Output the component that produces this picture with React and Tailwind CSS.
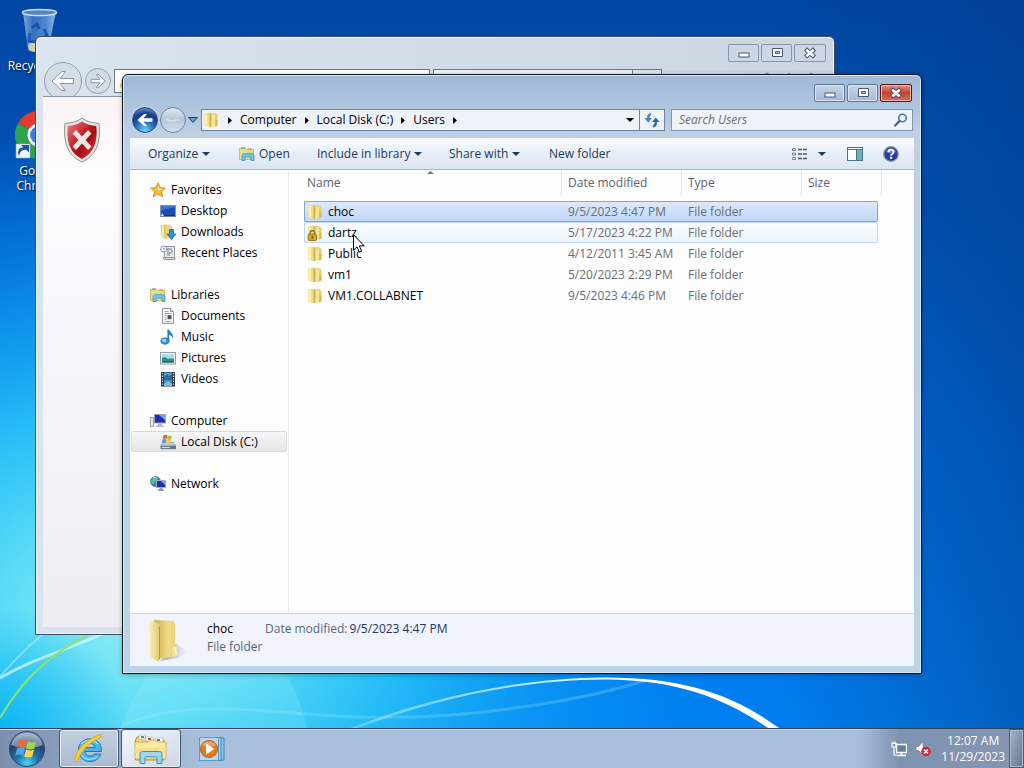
import { useState } from "react";
import clsx from "clsx";
import { Home, Settings, Star } from "lucide-react";

const FILES = [
  { name: "choc", modified: "9/5/2023 4:47 PM", type: "File folder" },
  { name: "dartz", modified: "5/17/2023 4:22 PM", type: "File folder", locked: true },
  { name: "Public", modified: "4/12/2011 3:45 AM", type: "File folder" },
  { name: "vm1", modified: "5/20/2023 2:29 PM", type: "File folder" },
  { name: "VM1.COLLABNET", modified: "9/5/2023 4:46 PM", type: "File folder" },
];

// Navigation pane groups, each with its own children
const NAV_GROUPS = [
  {
    label: "Favorites",
    Icon: StarIcon,
    items: [
      { label: "Desktop", Icon: DesktopIcon },
      { label: "Downloads", Icon: DownloadsIcon },
      { label: "Recent Places", Icon: RecentIcon },
    ],
  },
  {
    label: "Libraries",
    Icon: LibraryIcon,
    items: [
      { label: "Documents", Icon: DocumentIcon },
      { label: "Music", Icon: MusicIcon },
      { label: "Pictures", Icon: PictureIcon },
      { label: "Videos", Icon: VideoIcon },
    ],
  },
  {
    label: "Computer",
    Icon: ComputerIcon,
    items: [{ label: "Local Disk (C:)", Icon: DiskIcon, current: true }],
  },
  { label: "Network", Icon: NetworkIcon, items: [] },
];

const CRUMBS = ["Computer", "Local Disk (C:)", "Users"];

/* ---------- icons ---------- */

function FolderIcon({ locked }) {
  return (
    <svg className="size-4 shrink-0" viewBox="0 0 16 16">
      <path d="M7 1l5.500.3L14.500 3v10.500L8 15z" fill="#e8cf6c" />
      <path d="M9 2.500h3v11l-3.500 1z" fill="#f5e597" />
      <path d="M12.500 7l2 1v5.500l-2.500 1z" fill="#dcbc50" />
      <path d="M.8 1.800L6.500.5 8 2.500V15.200L1.500 14z" fill="#f1dd83" />
      <path d="M1.500 2.500L4 2v12L2 13.500z" fill="#fbf3bf" />
      <path d="M6.500.5L8 2.500v12.700l-1.300-.4z" fill="#cfae49" />
      {locked && (
        <g>
          <path d="M3 9.500V8a2.300 2.300 0 0 1 4.600 0v1.500" fill="none" stroke="#7a6420" strokeWidth="1.300" />
          <rect x="1" y="9.200" width="8.500" height="6.300" rx="1" fill="#d8a520" stroke="#8a6814" strokeWidth=".8" />
          <rect x="4.600" y="11" width="1.300" height="2.400" fill="#5a4208" />
        </g>
      )}
    </svg>
  );
}

function BigFolderIcon() {
  return (
    <svg className="h-[46px] w-10 shrink-0" viewBox="0 0 40 46">
      <defs>
        <linearGradient id="bf1" x1="0" x2="1">
          <stop offset="0" stopColor="#cdb04c" />
          <stop offset=".7" stopColor="#f0dc85" />
          <stop offset="1" stopColor="#e9d176" />
        </linearGradient>
        <linearGradient id="bf2" x1="0" x2="1">
          <stop offset="0" stopColor="#faf0b8" />
          <stop offset="1" stopColor="#e6cb6c" />
        </linearGradient>
        <linearGradient id="bf3" x1="0" x2="1">
          <stop offset=".3" stopColor="#7d8296" stopOpacity=".5" />
          <stop offset="1" stopColor="#7d8296" stopOpacity="0" />
        </linearGradient>
      </defs>
      <path d="M12 43l18-3 9-6-11-9z" fill="url(#bf3)" />
      <path d="M6 2l19 1 2 3v32l-17 3z" fill="url(#bf1)" />
      <path d="M24 30l4-2 2 9-5 2z" fill="#f3e49c" />
      <path d="M27 29l1 7" stroke="#fff" strokeWidth="1.500" />
      <path d="M1 2l8 3c2 1 2.500 2 2.500 5v31c0 2-1 3-2.500 2l-6-4c-1-1-1-1-1-3z" fill="url(#bf2)" />
      <path d="M11.500 9v32" stroke="#b8983c" strokeWidth="1" />
    </svg>
  );
}

function StarIcon() {
  return (
    <svg className="size-4 shrink-0" viewBox="0 0 16 16">
      <path
        d="M8 .8l2.200 4.800 5.200.5-3.900 3.500 1.200 5.200L8 12.100l-4.700 2.700 1.200-5.200L.6 6.100l5.200-.5z"
        fill="#fbb92f"
        stroke="#d9822b"
        strokeWidth=".9"
      />
      <path d="M8 2.800l1.300 3.600 3.600.4L8 9z" fill="#fff1a8" />
    </svg>
  );
}

function DesktopIcon() {
  return (
    <svg className="size-4 shrink-0" viewBox="0 0 16 16">
      <rect x=".5" y="2.500" width="15" height="11" fill="#1c4db4" stroke="#7e93b5" />
      <path d="M1 8c5-3 10-2 14-4V3H1z" fill="#3f74d6" />
      <path d="M1 12.500h14" stroke="#2b3553" strokeWidth="1.400" />
      <path d="M1 13l1-3 2 3z" fill="#d9ecff" />
    </svg>
  );
}

function DownloadsIcon() {
  return (
    <svg className="size-4 shrink-0" viewBox="0 0 16 16">
      <path d="M6 .5l6 .8v12L6 15z" fill="#ecd77c" />
      <path d="M.8 1.500L6 .5V15l-4.500-1.500z" fill="#e2c863" />
      <path d="M1.800 2.200L4 1.800v12l-2-.5z" fill="#f8eca8" />
      <path d="M9.500 5.500h4V10H16l-4.500 5.500L7 10h2.500z" fill="#2f8fd8" stroke="#15599f" strokeWidth=".7" />
    </svg>
  );
}

function RecentIcon() {
  return (
    <svg className="size-4 shrink-0" viewBox="0 0 16 16">
      <path d="M4.500 1.500h10v11h-10z" fill="#e9ecef" stroke="#8f98a1" />
      <path d="M7 4h5M7 6h2m2 0h2M7 8h5M7 10h3" stroke="#6f7a86" />
      <path d="M3 12.500h12v2H5c-1 0-2-1-2-2z" fill="#cfd5da" stroke="#8f98a1" />
      <circle cx="3.600" cy="4" r="3" fill="#fff" stroke="#8791a0" />
      <path d="M3.600 2.400V4h1.500" fill="none" stroke="#55606c" strokeWidth=".8" />
    </svg>
  );
}

function LibraryIcon() {
  return (
    <svg className="size-4 shrink-0" viewBox="0 0 16 16">
      <path d="M.5 2.500h6l1 1h7v10H.5z" fill="#f3dd88" stroke="#cfa94a" strokeWidth=".8" />
      <path d="M2 2h4" stroke="#58b158" strokeWidth="1.200" />
      <path d="M9 3h4" stroke="#e08a4a" strokeWidth="1.200" />
      <path d="M1.500 5h12.500v3H1.500z" fill="#cfe3a0" />
      <path d="M3 14.500V10c0-1.500.8-2.300 2.300-2.300h7.400c1.500 0 2.300.8 2.300 2.300v4.500h-3V11H6v3.500z" fill="#77c4ea" stroke="#3d8dbd" strokeWidth=".8" />
    </svg>
  );
}

function DocumentIcon() {
  return (
    <svg className="size-4 shrink-0" viewBox="0 0 16 16">
      <path d="M2.500.5h8l3 3v12h-11z" fill="#fdfdfd" stroke="#8d949c" />
      <path d="M10.500.5v3h3" fill="#dce1e6" stroke="#8d949c" />
      <path d="M4.500 3.500h4m-4 2h7m-7 2h2m-2 2h2m-2 2h2m-2 2h7" stroke="#9aa3ad" />
      <rect x="7.500" y="7.200" width="4" height="4" fill="#49545f" />
    </svg>
  );
}

function MusicIcon() {
  return (
    <svg className="size-4 shrink-0" viewBox="0 0 16 16">
      <ellipse cx="5" cy="12" rx="4.200" ry="3.200" fill="#3a93cf" stroke="#2a6fa8" strokeWidth=".6" />
      <ellipse cx="4.200" cy="11.400" rx="2" ry="1.300" fill="#a6dcf6" />
      <path d="M7.400 12V.5h1.600c.3 2.500 5 3.500 4 9.500-.8-2.800-2.200-3.800-3.800-4V12z" fill="#2c7fbe" />
    </svg>
  );
}

function PictureIcon() {
  return (
    <svg className="size-4 shrink-0" viewBox="0 0 16 16">
      <rect x=".5" y="2.500" width="15" height="11.500" fill="#fff" stroke="#8f9aa5" />
      <rect x="2" y="4" width="12" height="8.500" fill="#a9dcf0" />
      <path d="M2 8c2-1.500 4-1 6 1 2-.7 4-.5 6 0v3.500H2z" fill="#2f8f86" />
      <path d="M2 11h12v1.500H2z" fill="#1d5f7a" />
    </svg>
  );
}

function VideoIcon() {
  return (
    <svg className="size-4 shrink-0" viewBox="0 0 16 16">
      <rect x="1" y="1" width="14" height="14.500" fill="#29323d" />
      <rect x="4" y="1.500" width="8" height="6" fill="#4ea2dc" />
      <rect x="4" y="8.500" width="8" height="6.500" fill="#3a8fd0" />
      <path d="M4 6l3-3 2 2 3-2v4.500H4z" fill="#2a6f86" />
      <path d="M4 13l4-3 4 3v2H4z" fill="#7cc0ee" />
      <path d="M2.500 2v13M13.500 2v13" stroke="#e8edf2" strokeWidth="1.200" strokeDasharray="1.300 1.300" />
    </svg>
  );
}

function ComputerIcon() {
  return (
    <svg className="size-4 shrink-0" viewBox="0 0 16 16">
      <rect x=".5" y="4.500" width="3" height="9" fill="#dfe3e8" stroke="#8c95a0" strokeWidth=".8" />
      <rect x="4.500" y="1.500" width="11" height="8.500" fill="#1c2fb0" stroke="#98a3b4" />
      <path d="M9 2h6v5z" fill="#7f9cf2" />
      <path d="M8 10.500h4v2h2v1.500H6v-1.500h2z" fill="#b6bec9" />
    </svg>
  );
}

function DiskIcon() {
  return (
    <svg className="size-4 shrink-0" viewBox="0 0 16 16">
      <path d="M2.500 8.500h11L16 12H.5z" fill="#c3ccd6" stroke="#8a94a0" strokeWidth=".6" />
      <path d="M.5 11.800H16v3.400H.5z" fill="#66788c" />
      <path d="M2 13.500h8" stroke="#c8f08a" strokeWidth="1.200" />
      <path d="M3.500 1.400c1.500-.9 3-.7 4 0L6.700 5c-1-.7-2.500-.7-4 0z" fill="#e8622c" />
      <path d="M8 1.600c1.200.7 2.700.7 4 0L11 5.200c-1.300.7-2.700.7-3.900 0z" fill="#8cc63c" />
      <path d="M2.500 5.500c1.500-.8 3-.7 4 0l-.8 3.400c-1.200-.7-2.500-.7-4 0z" fill="#4a9be0" />
      <path d="M7 5.700c1.200.7 2.700.7 3.900 0L10 9.300c-1.300.7-2.700.7-3.900 0z" fill="#f8c62d" />
    </svg>
  );
}

function NetworkIcon() {
  return (
    <svg className="size-4 shrink-0" viewBox="0 0 16 16">
      <circle cx="5.500" cy="5.500" r="5" fill="#2c86cf" stroke="#1b5d98" strokeWidth=".6" />
      <path d="M2 3c2-2.500 5-2 5.500-.5S4.500 5 4.500 7 2 8 1 6.500 1.300 3.800 2 3z" fill="#5fc07b" />
      <path d="M3 1.800c1-.8 2.500-.8 3.500-.3" stroke="#d8f5ff" fill="none" />
      <rect x="6.500" y="4.500" width="9" height="7" fill="#1c2fb0" stroke="#a3adbd" />
      <path d="M11 5h4v4z" fill="#7f9cf2" />
      <path d="M9.500 12h3v1.500h1.500V15H8v-1.500h1.500z" fill="#8f9aa8" />
    </svg>
  );
}

function Caret() {
  return (
    <svg className="h-1 w-2 shrink-0" viewBox="0 0 8 4">
      <path d="M0 0h8L4 4z" fill="currentColor" />
    </svg>
  );
}

function ArrowRight() {
  return (
    <svg className="h-[7px] w-1 shrink-0" viewBox="0 0 4 7">
      <path d="M0 0l4 3.500L0 7z" fill="#000" />
    </svg>
  );
}

function RefreshIcon() {
  return (
    <svg className="size-4" viewBox="0 0 16 16">
      <path d="M7 2C4.500 2.500 4 4.500 4.200 6.500" fill="none" stroke="#3e7fc6" strokeWidth="2.200" />
      <path d="M.5 6h7.400L4.200 10.500z" fill="#3e7fc6" />
      <path d="M9 14.500c2.500-.5 3-2.500 2.800-4.500" fill="none" stroke="#2b66ae" strokeWidth="2.200" />
      <path d="M8.100 10h7.400L11.800 5.500z" fill="#2b66ae" />
    </svg>
  );
}

function SearchIcon() {
  return (
    <svg className="size-[14px]" viewBox="0 0 14 14">
      <circle cx="8.500" cy="5" r="3.800" fill="#eaf5fd" stroke="#4679b4" strokeWidth="1.600" />
      <path d="M5.600 8L1.200 12.600" stroke="#3c5f92" strokeWidth="2.200" strokeLinecap="round" />
    </svg>
  );
}

function ShieldIcon() {
  return (
    <svg className="h-[46px] w-[38px]" viewBox="0 0 38 46">
      <defs>
        <linearGradient id="sh" x1="0" y1="0" x2="1" y2="1">
          <stop offset="0" stopColor="#e78787" />
          <stop offset=".45" stopColor="#bf1c22" />
          <stop offset=".6" stopColor="#a60c14" />
          <stop offset="1" stopColor="#e8434a" />
        </linearGradient>
      </defs>
      <path d="M19 1c5 4 11 5 17 5.500 1.500 14 0 31-17 38.500C2 37.500.5 20.500 2 6.500 8 6 14 5 19 1z" fill="#e6e6e6" stroke="#8f8f8f" />
      <path d="M19 4.500c5 3 9 4 14.300 4.500C34.500 21 33 35 19 42 5 35 3.500 21 4.700 9 10 8.500 14 7.500 19 4.500z" fill="url(#sh)" />
      <path d="M13 13l6 6.500 6-6.500 3.500 3.500-6 6.500 6 6.500L25 33l-6-6.500L13 33l-3.500-3.500 6-6.500-6-6.500z" fill="#efe6e4" />
    </svg>
  );
}

function RecycleBinIcon() {
  return (
    <svg className="h-[46px] w-12" viewBox="0 0 48 46">
      <defs>
        <linearGradient id="bin" x1="0" x2="1">
          <stop offset="0" stopColor="#8fb6e2" />
          <stop offset=".3" stopColor="#3f78c4" />
          <stop offset=".7" stopColor="#5d94d8" />
          <stop offset="1" stopColor="#a9caec" />
        </linearGradient>
      </defs>
      <path d="M8 4l5 38c3 3 17 3 20 0l8-38z" fill="url(#bin)" opacity=".85" />
      <path d="M13 37c5-5 14-5 20 0l-1 5c-5 3-14 3-18 0z" fill="#d8cba8" />
      <ellipse cx="24.500" cy="4.500" rx="17" ry="3" fill="#5a83b8" stroke="#c9dbee" strokeWidth="1.500" />
      <path d="M17 20l5-4 2 5m-9 4l-1 8 7 1m6-3l5-4-3-6" fill="none" stroke="#1d56b0" strokeWidth="3" />
    </svg>
  );
}

function ChromeIcon() {
  return (
    <svg className="size-12" viewBox="0 0 48 48">
      <path d="M24 24L3.200 12A24 24 0 0 1 44.800 12z" fill="#e33b2e" />
      <path d="M24 24L3.200 12A24 24 0 0 0 24 48z" fill="#2ba24c" />
      <path d="M24 24h24a24 24 0 0 1-24 24z" fill="#fcc31e" />
      <path d="M24 24l20.800-12A24 24 0 0 1 48 24z" fill="#fcc31e" />
      <circle cx="24" cy="24" r="11.500" fill="#fff" />
      <circle cx="24" cy="24" r="9" fill="#3b7ded" />
      <rect x="1" y="33" width="14" height="14" fill="#eef3f8" stroke="#9ab" strokeWidth=".6" />
      <path d="M4 45c-2-5 0-9 4-8.500L6.500 34H14v7.500L11.500 39C8 38 5 40 4 45z" fill="#1d56a5" />
    </svg>
  );
}

function InternetExplorerIcon() {
  return (
    <svg className="size-8" viewBox="0 0 32 32">
      <path
        d="M28.500 18.500H11.800c.3 2.800 2.400 4.600 5.200 4.600 1.900 0 3.400-.7 4.200-2.100h6.600C26.200 25.600 22.200 28.500 17 28.500c-6.500 0-11.500-4.700-11.500-11.400S10.500 5.800 17 5.800c6.800 0 11.500 4.900 11.500 11.500zM11.900 14.600h10.200c-.4-2.500-2.400-4.100-5.100-4.100s-4.700 1.600-5.100 4.100z"
        fill="#4db4ea"
        stroke="#1d74b5"
        strokeWidth="1"
        fillRule="evenodd"
      />
      <path d="M8 11c4-4.500 12-5 17 0M8.500 22c3 5 11 6 16 1.500" stroke="#c8efff" strokeWidth="1.300" fill="none" opacity=".7" />
      <path d="M2.500 29C-.5 24 9 6 28.500 1.500L28 4.500C16 9 6.500 19.500 4.800 28.500z" fill="#f6cf2c" stroke="#d6a416" strokeWidth=".7" />
    </svg>
  );
}

function ExplorerIcon() {
  return (
    <svg className="h-8 w-9" viewBox="0 0 36 32">
      <path d="M4 4h9l2 3h16v20H2.500V7z" fill="#f0d070" stroke="#b98f2c" />
      <path d="M6 2h6v4H6z" fill="#fff" stroke="#9aa" strokeWidth=".5" />
      <path d="M13 4h7v4h-7z" fill="#fff" stroke="#9aa" strokeWidth=".5" />
      <path d="M22 5h8v4h-8z" fill="#fff" stroke="#9aa" strokeWidth=".5" />
      <path d="M8 3h3v2H8z" fill="#3aa343" />
      <path d="M15 5h3v2h-3z" fill="#d8462f" />
      <path d="M24 6h3v2h-3z" fill="#3a7fc4" />
      <path d="M2 9h13l2-2h6l1 2h9v17H2z" fill="#faeaa0" stroke="#cda43e" strokeWidth=".8" />
      <path d="M2.500 15h30v5h-30z" fill="#f6e08a" />
      <path d="M7 30.500V21c0-1.500 1-2.500 2.500-2.500h17c1.500 0 2.500 1 2.500 2.500v9.500h-5V25c0-.8-.4-1.200-1.200-1.200h-9.600c-.8 0-1.200.4-1.200 1.200v5.500z" fill="#9bd7f2" stroke="#3f8fbc" />
    </svg>
  );
}

function MediaPlayerIcon() {
  return (
    <svg className="size-7" viewBox="0 0 28 28">
      <rect x="6" y="3" width="20" height="22" fill="#8cc6e8" stroke="#3f86b8" />
      <rect x="4" y="2.500" width="19" height="23" fill="#a4d3ef" stroke="#3f86b8" />
      <rect x="1.500" y="2.500" width="19" height="23" fill="#b4d9ef" stroke="#5d9cc6" />
      <circle cx="11" cy="14" r="8.500" fill="#e8761f" stroke="#c25a12" />
      <path d="M4 10c3-5 11-5 14 0-4 2-10 2-14 0z" fill="#f7b27a" opacity=".7" />
      <path d="M8 8.500v11l8.500-5.500z" fill="#fff" />
    </svg>
  );
}

function StartOrb() {
  return (
    <svg className="size-[38px]" viewBox="0 0 38 38">
      <defs>
        <radialGradient id="orb" cx=".5" cy=".9" r=".9">
          <stop offset="0" stopColor="#4fd4f2" />
          <stop offset=".35" stopColor="#1d72a8" />
          <stop offset=".7" stopColor="#24436c" />
          <stop offset="1" stopColor="#8fa8c4" />
        </radialGradient>
      </defs>
      <circle cx="19" cy="19" r="17.500" fill="url(#orb)" stroke="#2a4a70" />
      <path d="M3.500 15C5 7 12 3 19 3s14 4 15.500 12c-8 4-23 4-31 0z" fill="#dfe9f4" opacity=".45" />
      <path d="M11 10.500c3-1.500 5.500-1.300 8 .2l-1.800 7c-2.500-1.500-5-1.700-8-.3z" fill="#ee6a35" />
      <path d="M20 11.300c2.500 1.400 5 1.400 8 .2l-1.800 7.200c-3 1.200-5.500 1-8-.3z" fill="#a6d14b" />
      <path d="M9 18.500c3-1.500 5.500-1.300 8 .2l-1.800 7c-2.500-1.500-5-1.700-8-.3z" fill="#4fa6e8" />
      <path d="M18 19.300c2.500 1.400 5 1.400 8 .2l-1.800 7.200c-3 1.200-5.500 1-8-.3z" fill="#fdd24a" />
    </svg>
  );
}

/* ---------- desktop ---------- */

function Wallpaper() {
  return (
    <svg className="absolute inset-0 size-full" viewBox="0 0 1024 728" preserveAspectRatio="none">
      <defs>
        <linearGradient id="sky" x1="0" y1="0" x2="0" y2="1">
          <stop offset="0" stopColor="#0146a4" />
          <stop offset=".3" stopColor="#0055b8" />
          <stop offset=".6" stopColor="#0068d8" />
          <stop offset="1" stopColor="#0080f2" />
        </linearGradient>
        <radialGradient id="glow" gradientUnits="userSpaceOnUse" cx="0" cy="0" r="1" gradientTransform="translate(130 620) scale(640 500)">
          <stop offset="0" stopColor="#8eecf5" />
          <stop offset=".2" stopColor="#5cdcf6" />
          <stop offset=".42" stopColor="#25bdf7" />
          <stop offset=".65" stopColor="#0f9ff6" stopOpacity=".7" />
          <stop offset="1" stopColor="#0080f2" stopOpacity="0" />
        </radialGradient>
        <radialGradient id="corner" gradientUnits="userSpaceOnUse" cx="0" cy="0" r="1" gradientTransform="translate(0 728) scale(130 120)">
          <stop offset="0" stopColor="#0bb6f4" />
          <stop offset="1" stopColor="#12b8f6" stopOpacity="0" />
        </radialGradient>
        <linearGradient id="shade" x1="0" x2="1">
          <stop offset=".75" stopColor="#00408c" stopOpacity="0" />
          <stop offset="1" stopColor="#003c88" stopOpacity=".5" />
        </linearGradient>
        <linearGradient id="arc" x1="0" x2="1">
          <stop offset="0" stopColor="#9fe6fc" stopOpacity=".4" />
          <stop offset=".4" stopColor="#c6efff" stopOpacity=".9" />
          <stop offset=".65" stopColor="#fff" />
        </linearGradient>
        <radialGradient id="haze" cx=".5" cy="1" r=".8">
          <stop offset="0" stopColor="#9af0f6" stopOpacity=".1" />
          <stop offset="1" stopColor="#9af0f6" stopOpacity=".25" />
        </radialGradient>
      </defs>
      <rect width="1024" height="728" fill="url(#sky)" />
      <rect width="1024" height="728" fill="url(#glow)" />
      <rect width="1024" height="728" fill="url(#corner)" />
      <rect width="1024" height="728" fill="url(#shade)" />
      <path d="M120 728C140 680 170 630 215 625s80 50 92 103z" fill="url(#haze)" />
      <path d="M122 725c50-20 100-18 160-13s140 12 260-8c50-8 80-16 104-24" fill="none" stroke="#a9ecfb" strokeWidth="3" opacity=".25" />
      {/* thin on the left, widening as it falls on the right */}
      <path d="M350 728C430 697 520 678 605 677.500c80 0 130 18 174 50.500h-11c-44-30-90-48-163-48.500-85 .5-165 18-247 48.500z" fill="url(#arc)" />
      <path d="M0 678C40 655 70 650 120 626" fill="none" stroke="#d6f8fd" strokeWidth="3" opacity=".7" />
      <path d="M0 676C16 660 30 642 52 628" fill="none" stroke="#b5f0fd" strokeWidth="2" opacity=".5" />
      <path d="M0 718C22 680 50 652 98 630" fill="none" stroke="#8fe36a" strokeWidth="2" />
    </svg>
  );
}

function DesktopShortcut({ label, children }) {
  return (
    <a
      href="#"
      className="flex w-[78px] flex-col items-center gap-1 text-center leading-[15px] text-white [text-shadow:1px_1px_2px_#000]"
    >
      {children}
      <span>{label}</span>
    </a>
  );
}

function CaptionButtons({ active }) {
  const base = "flex h-[18px] items-center justify-center rounded-[2px] border";
  const plain = active
    ? "border-[#62758f] bg-gradient-to-b from-[#c3d4e7] via-[#b4c9e0] via-50% to-[#a3bad5] shadow-[inset_0_0_0_1px_#dbe6f2]"
    : "border-[#8896a8] bg-[#ccd6e4]";
  return (
    <div className="flex gap-[2px]">
      <button aria-label="Minimize" className={clsx(base, plain, "w-[31px]")}>
        <svg className="h-3 w-4" viewBox="0 0 16 12">
          <rect x="3" y="6" width="10" height="4" fill="#fff" stroke="#4c5670" />
        </svg>
      </button>
      <button aria-label="Maximize" className={clsx(base, plain, "w-[31px]")}>
        <svg className="h-3 w-4" viewBox="0 0 16 12">
          <path d="M3.500 1.500h10v8h-10zm3 3v2h4v-2z" fill="#fff" stroke="#4c5670" fillRule="evenodd" />
        </svg>
      </button>
      <button
        aria-label="Close"
        className={clsx(
          base,
          "w-8",
          active
            ? "border-[#5b1a1a] bg-gradient-to-b from-[#e0968a] via-[#c4402c] via-50% to-[#d4705a] shadow-[inset_0_0_0_1px_#eab5aa]"
            : plain
        )}
      >
        <svg className="h-3 w-4" viewBox="0 0 16 12">
          <path d="M3.500 2l9 8m0-8l-9 8" stroke="#4c5670" strokeWidth="4.400" />
          <path d="M4.300 2.700l7.400 6.600m0-6.600L4.300 9.300" stroke="#fff" strokeWidth="2.600" />
        </svg>
      </button>
    </div>
  );
}

// Inactive browser window sitting behind the explorer
function BrowserWindow() {
  return (
    <section className="absolute top-9 right-[189px] bottom-[93px] left-[35px] flex flex-col rounded-t-[6px] border border-[#3e4c5e] bg-gradient-to-r from-[#d9e4ef] to-[#ccd5e2] px-[7px] pb-[7px] shadow-[inset_0_0_0_1px_#eef4fa]">
      <div className="flex h-[25px] items-end justify-end pr-[1px]">
        <CaptionButtons />
      </div>
      <div className="flex h-[34px] items-start overflow-hidden">
        <button aria-label="Back" className="ml-px flex size-[38px] shrink-0 items-center justify-center rounded-full border border-[#94a1b1] bg-[#d3dde8]">
          <svg className="size-6" viewBox="0 0 24 24">
            <path d="M1 12L11 2.500h3.500L9 9.500h13.500v5H9l5.500 7H11z" fill="#fff" stroke="#8894a4" />
          </svg>
        </button>
        <button aria-label="Forward" className="mt-[6px] ml-[3px] flex size-[26px] shrink-0 items-center justify-center rounded-full border border-[#94a1b1] bg-[#d3dde8]">
          <svg className="size-4" viewBox="0 0 24 24">
            <path d="M23 12L13 2.500H9.500l5.500 7H1.500v5H15l-5.500 7H13z" fill="#fff" stroke="#8894a4" strokeWidth="1.500" />
          </svg>
        </button>
        <div className="mt-[7px] ml-[3px] flex h-6 w-[316px] items-center border border-[#6c7886] bg-white pl-1">
          <svg className="size-4" viewBox="0 0 16 16">
            <path d="M13 9.500H5c0 3 4 4 5.500 1.500H13c-2 5-10 4-10-2.500S13-.5 13 9.500zM5 7h5.500C10 4 5.500 4 5 7z" fill="#4db4ea" stroke="#1d74b5" strokeWidth=".5" />
            <path d="M1 15C-.5 12 5 4 14 1 8 4 3 9 2.500 14.500z" fill="#f0cc30" />
          </svg>
        </div>
        <div className="mt-[7px] ml-[3px] h-6 w-[200px] border border-[#6c7886] bg-[#eaf0f6]" />
        <div className="mt-[7px] h-6 w-[29px] border border-l-0 border-[#6c7886] bg-[#dbe3ed]" />
        <div className="mt-[10px] ml-auto flex gap-[6px] pr-2 text-[#7d8896]">
          <Home className="size-4" />
          <Star className="size-4" />
          <Settings className="size-4" />
        </div>
      </div>
      <div className="flex-1 border-t border-[#8b97a6] bg-gradient-to-b from-[#fbf3f4] via-[#fdfdfe] via-15% to-[#ededf3] pt-5 pl-5">
        <ShieldIcon />
      </div>
    </section>
  );
}

function AddressBar() {
  return (
    <div className="flex h-[26px] items-center">
      <div className="flex h-[26px] items-center gap-[2px] pl-[2px]">
        <button aria-label="Back" className="flex size-[26px] items-center justify-center rounded-full border border-[#2c4c7c] bg-[radial-gradient(circle_at_50%_95%,#6fd8f8_0%,#1f66b8_40%,#123b86_65%,#8fb0dc_100%)] shadow-[0_0_1px_1px_#c7d9ee]">
          <svg className="size-4" viewBox="0 0 16 16">
            <path d="M.5 8l6.500-6h3L6.500 6.300h9v3.400h-9L10 14H7z" fill="#fff" />
          </svg>
        </button>
        <button aria-label="Forward" className="flex size-[26px] items-center justify-center rounded-full border border-[#74859c] bg-gradient-to-b from-[#dde7f0] via-[#b7c6d8] via-50% to-[#d3e0ec]">
          <svg className="size-4 opacity-60" viewBox="0 0 16 16">
            <path d="M1 7.500c3 1.500 10 1.500 13 0" fill="none" stroke="#eef4fa" strokeWidth="1.500" />
          </svg>
        </button>
        <button aria-label="Recent pages">
          <svg className="h-[6px] w-[10px]" viewBox="0 0 10 6">
            <path d="M.5.5h9L5 5.500z" fill="#5fa0c4" stroke="#1d3f63" />
          </svg>
        </button>
      </div>
      <nav className="ml-[3px] flex h-[22px] flex-1 items-center border border-[#71829b] bg-[#eef3fa] pl-[1px] text-black">
        <FolderIcon />
        <span className="ml-[9px]">
          <ArrowRight />
        </span>
        {CRUMBS.map((crumb) => (
          <span key={crumb} className="flex items-center gap-2 pl-2">
            <a href="#">{crumb}</a>
            <ArrowRight />
          </span>
        ))}
        <div className="flex-1" />
        <button aria-label="Previous locations" className="mr-[5px]">
          <Caret />
        </button>
        <button aria-label="Refresh" className="flex h-5 w-[25px] items-center justify-center border-l border-[#71829b]">
          <RefreshIcon />
        </button>
      </nav>
      <label className="mr-[1px] ml-1.5 flex h-[22px] w-[242px] items-center border border-[#8295ad] bg-[#eef3fa] pr-1 pl-[7px]">
        <input
          type="text"
          aria-label="Search Users"
          placeholder="Search Users"
          className="min-w-0 flex-1 bg-transparent italic outline-none placeholder:text-[#6d6d6d]"
        />
        <SearchIcon />
      </label>
    </div>
  );
}

function Toolbar() {
  return (
    <div className="flex h-8 items-center border-t border-b border-t-white border-b-[#a9b8cc] bg-gradient-to-b from-[#fbfdff] via-[#e6eef8] via-50% to-[#dbe6f2] pl-[18px] text-[#1e395b]">
      <button className="flex w-[91px] items-center gap-1">
        Organize <Caret />
      </button>
      <button className="flex w-[78px] items-center gap-1">
        <LibraryIcon /> Open
      </button>
      <button className="flex w-[132px] items-center gap-1 whitespace-nowrap">
        Include in library <Caret />
      </button>
      <button className="flex w-[100px] items-center gap-1 whitespace-nowrap">
        Share with <Caret />
      </button>
      <button className="whitespace-nowrap">New folder</button>
      <div className="flex-1" />
      <button aria-label="Change your view" className="flex items-center gap-[10px]">
        <svg className="size-4" viewBox="0 0 16 16">
          <path d="M.5 2.500h3v2h-3zm0 4.500h3v2h-3zm0 4.500h3v2h-3z" fill="#fff" stroke="#6c7a8c" strokeWidth=".9" />
          <path d="M6 3.500h4m1 0h4M6 8h4m1 0h4M6 12.500h4m1 0h4" stroke="#4a5666" strokeWidth="1.300" />
        </svg>
        <Caret />
      </button>
      <button aria-label="Show the preview pane" className="ml-[21px]">
        <svg className="size-4" viewBox="0 0 16 16">
          <rect x=".5" y="1.500" width="15" height="13" fill="#fff" stroke="#4d6f8c" />
          <path d="M1 3.500h14" stroke="#4d6f8c" />
          <path d="M10 4h5v10h-5z" fill="#5fb9b8" />
          <path d="M9.500 4v10" stroke="#4d6f8c" />
        </svg>
      </button>
      <button aria-label="Get help" className="mr-[15px] ml-5">
        <svg className="size-4" viewBox="0 0 16 16">
          <circle cx="8" cy="8" r="7.300" fill="#2a3f9c" stroke="#8a93a8" strokeWidth="1.300" />
          <path d="M3 6a5.300 5.300 0 0 1 10 0c-3 1.500-7 1.500-10 0z" fill="#7f93d8" opacity=".7" />
          <path d="M5.500 6.200c0-3.400 5-3.300 5-.2 0 1.900-2.400 1.700-2.400 3.700" fill="none" stroke="#fff" strokeWidth="1.900" />
          <rect x="7.100" y="10.800" width="2" height="2" fill="#fff" />
        </svg>
      </button>
    </div>
  );
}

function NavPane() {
  return (
    <aside className="w-[159px] shrink-0 space-y-[21px] border-r border-[#e4ebf3] pt-[9px] text-black">
      {NAV_GROUPS.map(({ label, Icon, items }) => (
        <div key={label}>
          <a href="#" className="flex h-[21px] items-center gap-[5px] pl-5">
            <Icon />
            {label}
          </a>
          {items.map((item) => (
            <a
              key={item.label}
              href="#"
              className={clsx(
                "mr-px ml-px flex h-[21px] items-center gap-[5px] rounded-[2px] border pl-7",
                item.current
                  ? "border-[#d9d9d9] bg-gradient-to-b from-[#f7f7f7] to-[#e6e6e6]"
                  : "border-transparent"
              )}
            >
              <item.Icon />
              {item.label}
            </a>
          ))}
        </div>
      ))}
    </aside>
  );
}

const ROW_STYLES = {
  selected: "border-[#7ea4d8] bg-gradient-to-b from-[#dce9fc] to-[#c0d8fb]",
  hover: "border-[#c3d9f2] bg-gradient-to-b from-[#fafcff] to-[#edf4fd]",
  none: "border-transparent",
};

function FileList({ selected, hovered, onSelect }) {
  const head = "border-r border-[#e3e8ee] pl-1.5 text-left font-normal text-[#5a6472]";

  function rowStyle(name) {
    if (name === selected) return ROW_STYLES.selected;
    if (name === hovered) return ROW_STYLES.hover;
    return ROW_STYLES.none;
  }

  return (
    <div className="min-w-0 flex-1 pl-[15px]">
      <table className="w-[578px] table-fixed border-separate border-spacing-0">
        <colgroup>
          <col className="w-[258px]" />
          <col className="w-[120px]" />
          <col className="w-[120px]" />
          <col className="w-[76px]" />
          <col className="w-1" />
        </colgroup>
        <thead>
          <tr className="h-[25px]">
            <th className="relative border-r border-[#e3e8ee] pl-[3px] text-left font-normal text-[#5a6472]">
              Name
              <svg className="absolute top-px right-[127px] h-[3px] w-[7px]" viewBox="0 0 7 3">
                <path d="M0 3l3.500-3L7 3z" fill="#5d7b9b" />
              </svg>
            </th>
            <th className={head}>Date modified</th>
            <th className={head}>Type</th>
            <th className={head} colSpan={2}>
              Size
            </th>
          </tr>
          <tr className="h-1.5" />
        </thead>
        <tbody>
          {FILES.map((file) => {
            const look = rowStyle(file.name);
            return (
              <tr key={file.name} className="h-[21px] text-[#6d6d6d]" onClick={() => onSelect(file.name)}>
                <td className={clsx("rounded-l-[2px] border-y border-l p-0 pl-[2px] text-black", look)}>
                  <span className="flex h-[19px] items-center gap-[5px]">
                    <FolderIcon locked={file.locked} />
                    {file.name}
                  </span>
                </td>
                <td className={clsx("border-y p-0 pl-1.5 whitespace-nowrap", look)}>{file.modified}</td>
                <td className={clsx("border-y p-0 pl-1.5", look)}>{file.type}</td>
                <td className={clsx("rounded-r-[2px] border-y border-r p-0", look)} />
              </tr>
            );
          })}
        </tbody>
      </table>
    </div>
  );
}

function ExplorerWindow() {
  const [selected, setSelected] = useState("choc");
  const current = FILES.find((f) => f.name === selected);

  return (
    <section className="absolute top-[74px] right-[102px] bottom-[54px] left-[122px] flex flex-col rounded-t-[6px] border border-[#10151c] bg-gradient-to-b from-[#9fb9d6] via-[#bdd0e6] via-10% to-[#b9d3e8] px-[7px] pb-[7px] shadow-[inset_0_0_0_1px_#dbe8f5,0_1px_5px_#0004]">
      <div className="flex h-8 items-start justify-end pt-[9px] pr-[2px]">
        <CaptionButtons active />
      </div>
      <AddressBar />
      <div className="mt-[5px] flex flex-1 flex-col bg-[#fdfdfe]">
        <Toolbar />
        <div className="flex flex-1">
          <NavPane />
          <FileList selected={selected} hovered="dartz" onSelect={setSelected} />
        </div>
        <footer className="flex h-[53px] items-start border-t border-[#ccd4e0] bg-[#f1f4fd] pt-1 pl-[18px]">
          <BigFolderIcon />
          <div className="mt-[2px] ml-[19px] text-[#5a6779]">
            <div className="flex h-[18px] items-center">
              <span className="w-[58px] text-black">{current.name}</span>
              <span>Date modified:</span>
              <span className="ml-[2px] text-[#1e395b]">{current.modified}</span>
            </div>
            <div className="flex h-[18px] items-center">{current.type}</div>
          </div>
        </footer>
      </div>
    </section>
  );
}

function Taskbar() {
  const running =
    "flex h-full w-[60px] items-center justify-center rounded-[3px] border border-[#46566d] shadow-[inset_0_0_0_1px_#e6eef7]";
  return (
    <footer className="flex h-10 shrink-0 items-center border-t border-[#2d4460] bg-gradient-to-r from-[#7c8fae] via-[#a8c0dc] via-20% to-[#a8c0dc] shadow-[inset_0_1px_0_#c8d8ea]">
      <button aria-label="Start" className="mr-[13px] ml-2">
        <StartOrb />
      </button>
      <button aria-label="Internet Explorer" className={clsx(running, "bg-gradient-to-b from-[#c3cfdf] to-[#a9bbd2]")}>
        <InternetExplorerIcon />
      </button>
      <button aria-label="Windows Explorer" className={clsx(running, "ml-[2px] bg-gradient-to-br from-[#f3f6fa] to-[#ccd8e7]")}>
        <ExplorerIcon />
      </button>
      <button aria-label="Windows Media Player" className="ml-[17px]">
        <MediaPlayerIcon />
      </button>
      <div className="flex-1" />
      <div className="flex h-full items-center bg-gradient-to-r from-transparent via-[#7f92b0] via-25% to-[#8496b3] pl-[33px] text-white">
        <svg className="size-4" viewBox="0 0 16 16">
          <path d="M5.500 3.500h10v8h-10z" fill="#6b7f9b" stroke="#fff" strokeWidth="1.300" />
          <path d="M6 14.500h9M10.500 12v2" stroke="#fff" strokeWidth="1.500" />
          <path d="M1 2.500h4v3.500H1zM2 .5v2M4 .5v2M3 6v8h3" fill="none" stroke="#fff" strokeWidth="1.200" />
        </svg>
        <svg className="ml-2 size-4" viewBox="0 0 16 16">
          <path d="M1 5.500h2.500L8 1v13L3.500 9.500H1z" fill="#fff" stroke="#58687f" strokeWidth=".5" />
          <circle cx="11" cy="10.500" r="4.700" fill="#d2232a" />
          <path d="M9 8.500l4 4m0-4l-4 4" stroke="#fff" strokeWidth="1.500" />
        </svg>
        <div className="ml-[10px] flex flex-col items-center leading-4">
          <span>12:07 AM</span>
          <span>11/29/2023</span>
        </div>
        <button
          aria-label="Show desktop"
          className="ml-1 h-full w-[15px] border border-[#4c5c74] bg-gradient-to-br from-[#a3b2c8] to-[#64768f] shadow-[inset_0_0_0_1px_#a9b9cd]"
        />
      </div>
    </footer>
  );
}

export default function App() {
  return (
    <div className="flex h-screen w-full flex-col overflow-hidden font-['Open_Sans','Segoe_UI',sans-serif] text-[12px] leading-4">
      <main className="relative flex-1 overflow-hidden bg-[#0055b8]">
        <Wallpaper />
        <div className="relative flex flex-col gap-[38px] pt-2">
          <DesktopShortcut label="Recycle Bin">
            <RecycleBinIcon />
          </DesktopShortcut>
          <DesktopShortcut label="Google Chrome">
            <ChromeIcon />
          </DesktopShortcut>
        </div>
        <BrowserWindow />
        <ExplorerWindow />
        {/* mouse pointer */}
        <svg className="pointer-events-none absolute top-[234px] left-[353px] h-[19px] w-3" viewBox="0 0 12 19">
          <path d="M.5.8v15.400l3.500-3.400 2.300 5.300 2.300-1-2.300-5.200h5z" fill="#fff" stroke="#000" />
        </svg>
      </main>
      <Taskbar />
    </div>
  );
}
